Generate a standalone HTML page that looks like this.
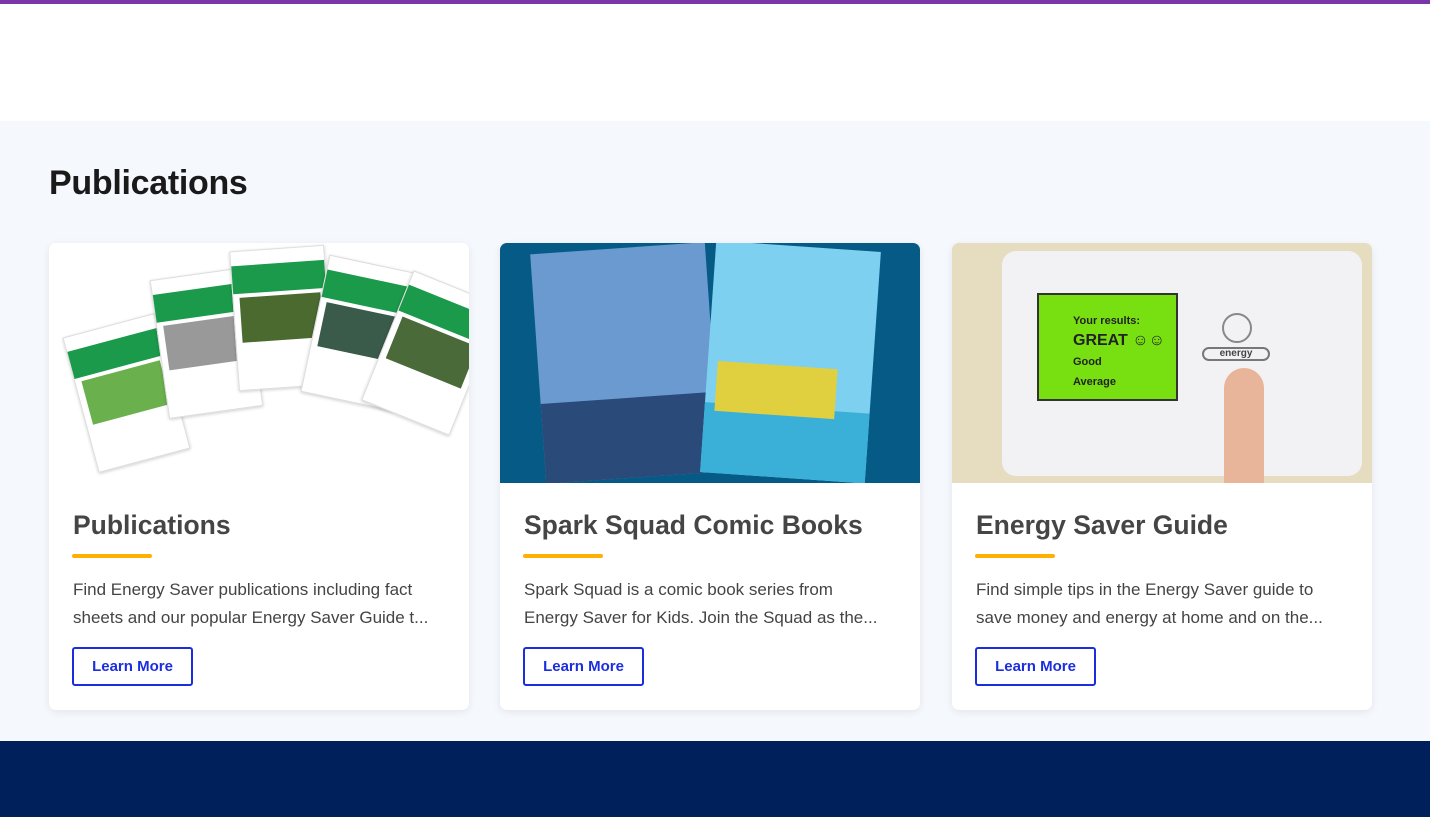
<!DOCTYPE html>
<html><head><meta charset="utf-8"><style>
*{margin:0;padding:0;box-sizing:border-box}
body{width:1430px;height:817px;overflow:hidden;font-family:"Liberation Sans",sans-serif;background:#fff;position:relative}
.top{position:absolute;left:0;top:0;width:1430px;height:4px;background:#7a35a8}
.sec{position:absolute;left:0;top:121px;width:1430px;height:620px;background:#f5f8fd}
h1{position:absolute;left:49px;top:164px;font-size:34px;font-weight:700;color:#1a1a1a;letter-spacing:-0.3px}
.card{position:absolute;top:243px;width:420px;height:467px;background:#fff;border-radius:7px;box-shadow:0 2px 8px rgba(0,0,0,.08);overflow:hidden}
.img{position:absolute;left:0;top:0;width:100%;height:240px;overflow:hidden}
.card h2{position:absolute;left:24px;top:267px;font-size:26.5px;font-weight:700;color:#454545}
.bar{position:absolute;left:23px;top:311px;width:80px;height:4px;background:#ffb000;border-radius:2px}
.card p{position:absolute;left:24px;top:333px;width:366px;font-size:17px;line-height:28px;color:#444}
.btn{position:absolute;left:23px;top:404px;width:121px;height:39px;border:2px solid #1a2ee0;border-radius:3px;color:#1a2ee0;font-weight:700;font-size:15px;text-align:center;line-height:35px}
.foot{position:absolute;left:0;top:741px;width:1430px;height:76px;background:#00205b}
.doc{position:absolute;width:95px;height:140px;background:#fff;border:1px solid #ddd;box-shadow:0 1px 3px rgba(0,0,0,.2)}
.doc i{display:block;height:28px;background:#1a9a4a;margin-top:14px}
.doc b{display:block;height:45px;background:#5a8a40;margin:4px 6px}
</style></head><body>
<div class="top"></div>
<div class="sec"></div>
<h1>Publications</h1>

<div class="card" style="left:49px">
 <div class="img" style="background:#fff">
  <div class="doc" style="left:30px;top:80px;transform:rotate(-15deg)"><i></i><b style="background:#6ab04c"></b></div>
  <div class="doc" style="left:110px;top:30px;transform:rotate(-8deg)"><i></i><b style="background:#999"></b></div>
  <div class="doc" style="left:185px;top:5px;transform:rotate(-4deg)"><i></i><b style="background:#4a6a30"></b></div>
  <div class="doc" style="left:265px;top:20px;transform:rotate(12deg)"><i></i><b style="background:#3a5a4a"></b></div>
  <div class="doc" style="left:335px;top:40px;transform:rotate(22deg)"><i></i><b style="background:#4a6a3a"></b></div>
 </div>
 <h2>Publications</h2><div class="bar"></div>
 <p>Find Energy Saver publications including fact sheets and our popular Energy Saver Guide t...</p>
 <div class="btn">Learn More</div>
</div>

<div class="card" style="left:500px">
 <div class="img" style="background:#055a86">
  <div style="position:absolute;left:38px;top:5px;width:175px;height:230px;background:#6a9ad0;transform:rotate(-4deg)"><div style="position:absolute;left:0;bottom:0;width:100%;height:80px;background:#2a4a7a"></div></div>
  <div style="position:absolute;left:208px;top:3px;width:165px;height:232px;background:#7ed0f0;transform:rotate(4deg)"><div style="position:absolute;left:0;bottom:0;width:100%;height:70px;background:#3ab0d8"></div><div style="position:absolute;left:10px;top:120px;width:120px;height:50px;background:#e0d040"></div></div>
 </div>
 <h2>Spark Squad Comic Books</h2><div class="bar"></div>
 <p>Spark Squad is a comic book series from Energy Saver for Kids. Join the Squad as the...</p>
 <div class="btn">Learn More</div>
</div>

<div class="card" style="left:952px">
 <div class="img" style="background:#e6dcc0">
  <div style="position:absolute;left:50px;top:8px;width:360px;height:225px;background:#f2f2f4;border-radius:14px"></div>
  <div style="position:absolute;left:85px;top:50px;width:141px;height:108px;background:#78e010;border:2px solid #333;font-size:11px;font-weight:700;color:#222;padding:16px 0 0 34px;line-height:20px">Your results:<br><span style="font-size:16px">GREAT ☺☺</span><br>Good<br>Average</div>
  <div style="position:absolute;left:270px;top:70px;width:30px;height:30px;border:2px solid #888;border-radius:50%"></div>
  <div style="position:absolute;left:250px;top:104px;width:68px;height:14px;border:2px solid #777;border-radius:7px;font-size:10px;text-align:center;line-height:10px;font-weight:700;color:#444">energy</div>
  <div style="position:absolute;left:272px;top:125px;width:40px;height:115px;background:#e8b49a;border-radius:20px 20px 0 0"></div>
 </div>
 <h2>Energy Saver Guide</h2><div class="bar"></div>
 <p>Find simple tips in the Energy Saver guide to save money and energy at home and on the...</p>
 <div class="btn">Learn More</div>
</div>

<div class="foot"></div>
</body></html>
